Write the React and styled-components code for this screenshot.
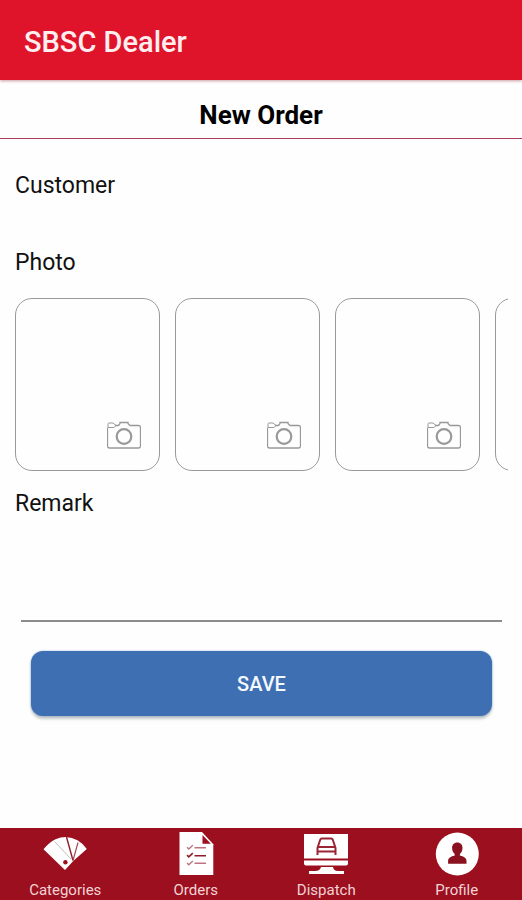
import { useState } from 'react'
import styled, { createGlobalStyle } from 'styled-components'

const GlobalStyle = createGlobalStyle`
  * {
    box-sizing: border-box;
  }
  body {
    margin: 0;
    background-color: #fefefe;
    color: #111111;
    font-family: Roboto, sans-serif;
  }
`

const Page = styled.div`
  display: flex;
  flex-direction: column;
  min-height: 100vh;
`

const AppBar = styled.header`
  display: flex;
  align-items: center;
  height: 80px;
  padding: 4px 24px 0;
  background-color: #df142b;
  box-shadow: 0 1px 3px rgba(120, 0, 20, 0.4);
  color: #ffeef0;
  font-size: 29px;
  font-weight: 500;
`

const PageTitle = styled.h1`
  margin: 0;
  padding: 19px 16px 7px;
  border-bottom: 1px solid #a8405a;
  color: #000000;
  font-size: 26px;
  font-weight: 700;
  line-height: 32px;
  text-align: center;
`

const Form = styled.form`
  display: flex;
  flex: 1;
  flex-direction: column;
  padding: 33px 14px 32px 15px;
`

const Label = styled.label`
  font-size: 23px;
  line-height: 28px;
`

const TextInput = styled.input`
  height: 49px;
  padding: 0;
  border: none;
  outline: none;
  background: transparent;
  font: inherit;
  font-size: 23px;
`

const PhotoGroup = styled.div`
  display: flex;
  flex-direction: column;
  gap: 21px;
`

const PhotoRow = styled.div`
  display: flex;
  gap: 15px;
  margin-bottom: 19px;
  overflow-x: auto;
  scrollbar-width: none;
`

const PhotoBtn = styled.button`
  display: flex;
  flex: none;
  align-items: flex-end;
  justify-content: flex-end;
  width: 145px;
  height: 173px;
  padding: 0 18px 21px;
  border: 1px solid #999999;
  border-radius: 17px;
  background: transparent;
`

const RemarkInput = styled.textarea`
  height: 104px;
  margin: 0 6px 29px;
  padding: 8px 0;
  border: none;
  border-bottom: 2px solid #8c8c8c;
  outline: none;
  background: transparent;
  font: inherit;
  font-size: 23px;
  resize: none;
`

const SaveBtn = styled.button`
  height: 65px;
  margin: 0 16px;
  border: none;
  border-radius: 12px;
  background-color: #3f6fb3;
  box-shadow: 0 3px 3px rgba(60, 80, 80, 0.3), 0 0 2px #8fb0dc;
  color: #f4f9ff;
  font-family: inherit;
  font-size: 20px;
  font-weight: 500;
`

const TabBar = styled.nav`
  display: grid;
  grid-template-columns: repeat(4, 1fr);
  height: 72px;
  padding-top: 4px;
  background-color: #9b0f1e;
`

const TabLink = styled.a`
  display: flex;
  flex-direction: column;
  align-items: center;
  gap: 5px;
  color: #f3d3d6;
  font-size: 15px;
  line-height: 18px;
  text-decoration: none;
`

const CameraIcon = () => (
  <svg width="34" height="28" viewBox="0 0 34 28" fill="none" stroke="#999999">
    <path
      d="M8 4.500h3.500l1.500-2V1.500h8v1l2 2h8.500a2 2 0 0 1 2 2v18.500a2 2 0 0 1-2 2h-29a2 2 0 0 1-2-2V7"
      strokeWidth="1.300"
    />
    <path d="M1 7V3q0-1 1-1h4l3 2.500-2 2H1" />
    <circle cx="17" cy="15.500" r="7.300" strokeWidth="2.200" />
  </svg>
)

const CategoriesIcon = () => (
  <svg width="44" height="44" viewBox="0 0 44 44" fill="none">
    <path
      d="M.5 17.300Q6 10.500 12.500 7.300Q17.500 5 22.800 5Q29 5.200 34.500 8.300Q40 11.500 43.800 17L30.500 28.800L22 38z"
      fill="#ffffff"
    />
    <path d="M11.500 9.500L28 27" stroke="#c9b9bb" />
    <path d="M23.500 5L30 28.500" stroke="#8f1c2b" strokeWidth="1.400" />
    <path d="M35 10.500L30 28.500" stroke="#a84855" strokeWidth="1.200" />
    <circle cx="22.400" cy="30.300" r="2.200" fill="#9b0f1e" />
  </svg>
)

const OrdersIcon = () => (
  <svg width="44" height="44" viewBox="0 0 44 44" fill="none">
    <path d="M5.500 0H28l11.300 12.300V43H5.500z" fill="#ffffff" />
    <path d="M28.500 3v8.700h8.300z" fill="#9b0f1e" />
    <path
      d="M13 15.300l1.800 1.700 4-3.700M13 31l1.800 1.700 4-3.700M20.500 15.800H32M20.500 31.300H32"
      stroke="#bd7480"
      strokeWidth="1.400"
    />
    <path d="M13 23.200l1.800 1.700 4-3.700M20.500 23.700H32" stroke="#8f1c2b" strokeWidth="1.600" />
  </svg>
)

const DispatchIcon = () => (
  <svg width="44" height="44" viewBox="0 0 44 44" fill="none">
    <path
      d="M0 2h44v24.500H0zM0 28.500h44v3q0 2-2 2H2q-2 0-2-2zM17 35h12q.5 4 5 4h6v3H5v-3h6q5 0 6-4z"
      fill="#ffffff"
    />
    <path
      d="M13.500 23v-7l2.700-8.200q.4-1.300 1.600-1.300h9.400q1.200 0 1.600 1.300l2.700 8.200v7M14 15h17M13.500 19.500h18"
      stroke="#9b2435"
      strokeWidth="2"
    />
  </svg>
)

const ProfileIcon = () => (
  <svg width="44" height="44" viewBox="0 0 44 44">
    <circle cx="22.300" cy="22" r="21.500" fill="#ffffff" />
    <path
      d="M22.300 10.500c3.400 0 5.200 2.400 5.200 5.500 0 2.500-1 4.700-2.600 6v1.500c4 1 6.600 2.500 6.600 5.500v2.700H13.100V29c0-3 2.600-4.500 6.600-5.500V22c-1.600-1.300-2.600-3.500-2.600-6 0-3.100 1.800-5.500 5.200-5.500z"
      fill="#8a1220"
    />
  </svg>
)

const tabs = [
  { name: 'Categories', Icon: CategoriesIcon },
  { name: 'Orders', Icon: OrdersIcon },
  { name: 'Dispatch', Icon: DispatchIcon },
  { name: 'Profile', Icon: ProfileIcon },
]

export default function App() {
  const [customer, setCustomer] = useState('')
  const [remark, setRemark] = useState('')

  const handleSubmit = (e) => {
    e.preventDefault()
  }

  return (
    <>
      <GlobalStyle />
      <Page>
        <AppBar>SBSC Dealer</AppBar>
        <PageTitle>New Order</PageTitle>
        <Form onSubmit={handleSubmit}>
          <Label htmlFor="customer">Customer</Label>
          <TextInput
            id="customer"
            value={customer}
            onChange={(e) => setCustomer(e.target.value)}
          />
          <PhotoGroup role="group" aria-labelledby="photo">
            <Label as="span" id="photo">
              Photo
            </Label>
            <PhotoRow>
              {[1, 2, 3, 4].map((no) => (
                <PhotoBtn key={`photoNo${no}`} type="button" aria-labelledby="photo">
                  <CameraIcon />
                </PhotoBtn>
              ))}
            </PhotoRow>
          </PhotoGroup>
          <Label htmlFor="remark">Remark</Label>
          <RemarkInput
            id="remark"
            value={remark}
            onChange={(e) => setRemark(e.target.value)}
          />
          <SaveBtn type="submit">SAVE</SaveBtn>
        </Form>
        <TabBar>
          {tabs.map(({ name, Icon }) => (
            <TabLink key={name} href={`#${name.toLowerCase()}`}>
              <Icon />
              {name}
            </TabLink>
          ))}
        </TabBar>
      </Page>
    </>
  )
}
